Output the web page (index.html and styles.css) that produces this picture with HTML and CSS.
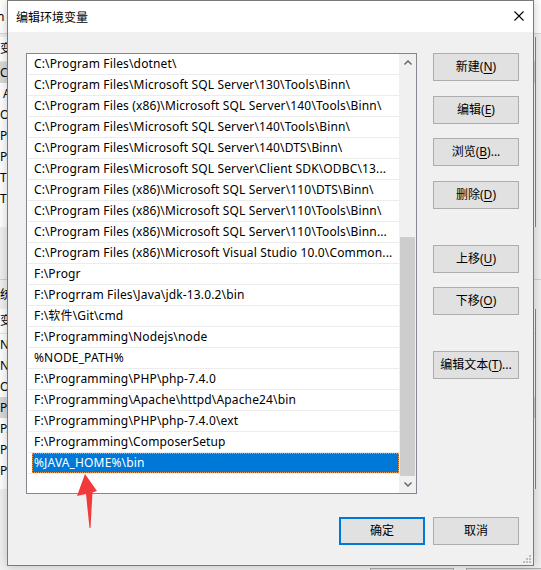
FILE: index.html
```html
<!DOCTYPE html>
<html lang="zh-CN">
<head>
<meta charset="utf-8">
<title>编辑环境变量</title>
<link rel="stylesheet" href="styles.css">
</head>
<body>
<div class="bgwin">
  <div class="bg-head"><span class="bg-text">n</span></div>
  <div class="bg-list bg-list1">
    <div class="bg-hdr">变量</div>
    <div class="bg-row sel">CLASSPATH</div>
    <div class="bg-row">&nbsp;ANDROID</div>
    <div class="bg-row">OneDrive</div>
    <div class="bg-row">Path</div>
    <div class="bg-row">PTHOME</div>
    <div class="bg-row">TEMP</div>
    <div class="bg-row">TMP</div>
  </div>
  <div class="bg-label">统</div>
  <div class="bg-list bg-list2">
    <div class="bg-hdr">变量</div>
    <div class="bg-row">NODE_PATH</div>
    <div class="bg-row">NUMBER</div>
    <div class="bg-row">OS</div>
    <div class="bg-row sel">Path</div>
    <div class="bg-row">PATHEXT</div>
    <div class="bg-row">PROCESSOR</div>
    <div class="bg-row">PROCESSOR</div>
  </div>
  <div class="bg-foot"><span class="bg-btn"></span><span class="bg-btn"></span></div>
</div>

<div class="dialog">
  <div class="titlebar">
    <span class="title">编辑环境变量</span>
    <svg class="close" width="10" height="10" viewBox="0 0 10 10"><path d="M0.5 0.5 L9.5 9.5 M9.5 0.5 L0.5 9.5" stroke="#000" stroke-width="1.1" fill="none"/></svg>
  </div>
  <div class="content">
    <div class="main">
      <div class="listbox">
        <div class="rows">
          <div class="row"><span class="cell">C:\Program Files\dotnet\</span></div>
          <div class="row"><span class="cell">C:\Program Files\Microsoft SQL Server\130\Tools\Binn\</span></div>
          <div class="row"><span class="cell">C:\Program Files (x86)\Microsoft SQL Server\140\Tools\Binn\</span></div>
          <div class="row"><span class="cell">C:\Program Files\Microsoft SQL Server\140\Tools\Binn\</span></div>
          <div class="row"><span class="cell">C:\Program Files\Microsoft SQL Server\140\DTS\Binn\</span></div>
          <div class="row"><span class="cell">C:\Program Files\Microsoft SQL Server\Client SDK\ODBC\13...</span></div>
          <div class="row"><span class="cell">C:\Program Files (x86)\Microsoft SQL Server\110\DTS\Binn\</span></div>
          <div class="row"><span class="cell">C:\Program Files (x86)\Microsoft SQL Server\110\Tools\Binn\</span></div>
          <div class="row"><span class="cell">C:\Program Files (x86)\Microsoft SQL Server\110\Tools\Binn...</span></div>
          <div class="row"><span class="cell">C:\Program Files (x86)\Microsoft Visual Studio 10.0\Common...</span></div>
          <div class="row"><span class="cell">F:\Progr</span></div>
          <div class="row"><span class="cell">F:\Progrram Files\Java\jdk-13.0.2\bin</span></div>
          <div class="row"><span class="cell">F:\软件\Git\cmd</span></div>
          <div class="row"><span class="cell">F:\Programming\Nodejs\node</span></div>
          <div class="row"><span class="cell">%NODE_PATH%</span></div>
          <div class="row"><span class="cell">F:\Programming\PHP\php-7.4.0</span></div>
          <div class="row"><span class="cell">F:\Programming\Apache\httpd\Apache24\bin</span></div>
          <div class="row"><span class="cell">F:\Programming\PHP\php-7.4.0\ext</span></div>
          <div class="row"><span class="cell">F:\Programming\ComposerSetup</span></div>
          <div class="row selected"><span class="cell">%JAVA_HOME%\bin</span></div>
        </div>
        <div class="scrollbar">
          <div class="sb-btn">
            <svg width="8" height="5" viewBox="0 0 8 5"><path d="M0.5 4.5 L4 1 L7.5 4.5" stroke="#606060" stroke-width="1.4" fill="none"/></svg>
          </div>
          <div class="sb-track"><div class="sb-thumb"></div></div>
          <div class="sb-btn">
            <svg width="8" height="5" viewBox="0 0 8 5"><path d="M0.5 0.5 L4 4 L7.5 0.5" stroke="#606060" stroke-width="1.4" fill="none"/></svg>
          </div>
        </div>
      </div>
      <div class="side">
        <button class="btn">新建(<u>N</u>)</button>
        <button class="btn nudge">编辑(<u>E</u>)</button>
        <button class="btn">浏览(<u>B</u>)...</button>
        <button class="btn nudge">删除(<u>D</u>)</button>
        <button class="btn far">上移(<u>U</u>)</button>
        <button class="btn">下移(<u>O</u>)</button>
        <button class="btn far">编辑文本(<u>T</u>)...</button>
      </div>
    </div>
    <div class="footer">
      <button class="btn default">确定</button>
      <button class="btn">取消</button>
    </div>
  </div>
  <svg class="grip" width="8" height="8" viewBox="0 0 8 8">
    <rect x="6" y="0" width="2" height="2" fill="#bcbcbc"/>
    <rect x="3" y="3" width="2" height="2" fill="#bcbcbc"/>
    <rect x="6" y="3" width="2" height="2" fill="#bcbcbc"/>
    <rect x="0" y="6" width="2" height="2" fill="#bcbcbc"/>
    <rect x="3" y="6" width="2" height="2" fill="#bcbcbc"/>
    <rect x="6" y="6" width="2" height="2" fill="#bcbcbc"/>
  </svg>
  <svg class="pointer" width="24" height="58" viewBox="0 0 24 58">
    <polygon points="8,0 20,17 15.5,18.5 13.5,54 12.5,54 9,20 0,22" fill="#f23a3a"/>
  </svg>
</div>
</body>
</html>
```

FILE: styles.css
```css
* { box-sizing: border-box; }
html, body { margin: 0; padding: 0; }
body {
  width: 541px;
  height: 570px;
  overflow: hidden;
  position: relative;
  background: #f0f0f0;
  font-family: "Noto Sans", "Noto Sans CJK SC", sans-serif;
  font-size: 12px;
  color: #000;
}

/* window underneath */
.bgwin {
  position: absolute;
  left: 0;
  top: 0;
  width: 541px;
  height: 570px;
  overflow: hidden;
  display: flex;
  flex-direction: column;
  background: #f0f0f0;
}
.bg-head {
  flex: none;
  height: 34px;
  background: #fff;
  border-bottom: 1px solid #d8d8d8;
  display: flex;
  align-items: center;
}
.bg-text { margin-left: -3px; }
.bg-list {
  flex: none;
  margin-right: 5px;
  background: #fff;
  border-right: 1px solid #828790;
  display: flex;
  flex-direction: column;
}
.bg-list1 { margin-top: 3px; height: 190px; }
.bg-list2 { height: 180px; }
.bg-hdr {
  height: 25px;
  line-height: 24px;
  border-bottom: 1px solid #e5e5e5;
}
.bg-row {
  height: 21px;
  line-height: 21px;
}
.bg-row.sel { background: #d9d9d9; }
.bg-label {
  flex: none;
  margin-top: 52px;
  height: 30px;
  line-height: 30px;
  border-top: 1px solid #d0d0d0;
}
.bg-foot {
  flex: none;
  margin-top: 79px;
  padding-left: 370px;
  display: flex;
  gap: 12px;
}
.bg-btn {
  flex: none;
  width: 84px;
  height: 26px;
  background: #e1e1e1;
  border: 1px solid #adadad;
}

/* dialog */
.dialog {
  position: absolute;
  left: 7px;
  top: 0;
  width: 527px;
  height: 566px;
  border: 1px solid #7a7a7a;
  background: #f0f0f0;
  box-shadow: 0 0 10px rgba(0, 0, 0, 0.22);
  display: flex;
  flex-direction: column;
}
.titlebar {
  height: 31px;
  background: #fff;
  display: flex;
  align-items: center;
  justify-content: space-between;
  padding: 0 8px 1px 8px;
}
.title {
  font-family: "Noto Sans CJK SC", sans-serif;
  font-size: 12px;
}
.close { display: block; margin-right: 1px; }

.content {
  padding: 21px 14px 0 18px;
  display: flex;
  flex-direction: column;
}
.main {
  display: flex;
  gap: 16px;
  align-items: flex-start;
}
.listbox {
  width: 391px;
  height: 441px;
  border: 1px solid #828790;
  background: #fff;
  display: flex;
}
.rows {
  flex: 1;
  display: flex;
  flex-direction: column;
}
.row {
  height: 21px;
  margin-left: 1px;
  padding-left: 4px;
  border-bottom: 1px solid #ececec;
  display: flex;
}
.cell {
  flex: 1;
  height: 20px;
  line-height: 20px;
  padding-left: 2px;
  white-space: nowrap;
  overflow: hidden;
  letter-spacing: 0.15px;
}
.row.selected .cell {
  background: #0078d7;
  color: #fff;
  outline: 1px dotted #e89a50;
  outline-offset: -1px;
}

.scrollbar {
  width: 17px;
  background: #f0f0f0;
  display: flex;
  flex-direction: column;
}
.sb-btn {
  height: 17px;
  display: flex;
  align-items: center;
  justify-content: center;
}
.sb-btn svg { display: block; }
.sb-track {
  flex: 1;
  display: flex;
  flex-direction: column;
  justify-content: flex-end;
}
.sb-thumb {
  height: 239px;
  margin: 0 1px 0 1px;
  background: #cdcdcd;
}

.side {
  display: flex;
  flex-direction: column;
  gap: 14px;
}
.btn {
  width: 86px;
  height: 28px;
  padding: 0;
  margin: 0;
  background: #e1e1e1;
  border: 1px solid #adadad;
  border-radius: 0;
  font-family: "Noto Sans", "Noto Sans CJK SC", sans-serif;
  font-size: 12px;
  color: #000;
  line-height: 1;
}
.btn u { text-underline-offset: 2px; }
.btn.nudge { margin-top: 1px; }
.btn.far { margin-top: 22px; }
.btn.default { border: 2px solid #0078d7; }

.footer {
  margin-top: 23px;
  display: flex;
  justify-content: flex-end;
  gap: 8px;
}

.grip {
  position: absolute;
  right: 2px;
  bottom: 2px;
}
.pointer {
  position: absolute;
  left: 69px;
  top: 473px;
}
```
